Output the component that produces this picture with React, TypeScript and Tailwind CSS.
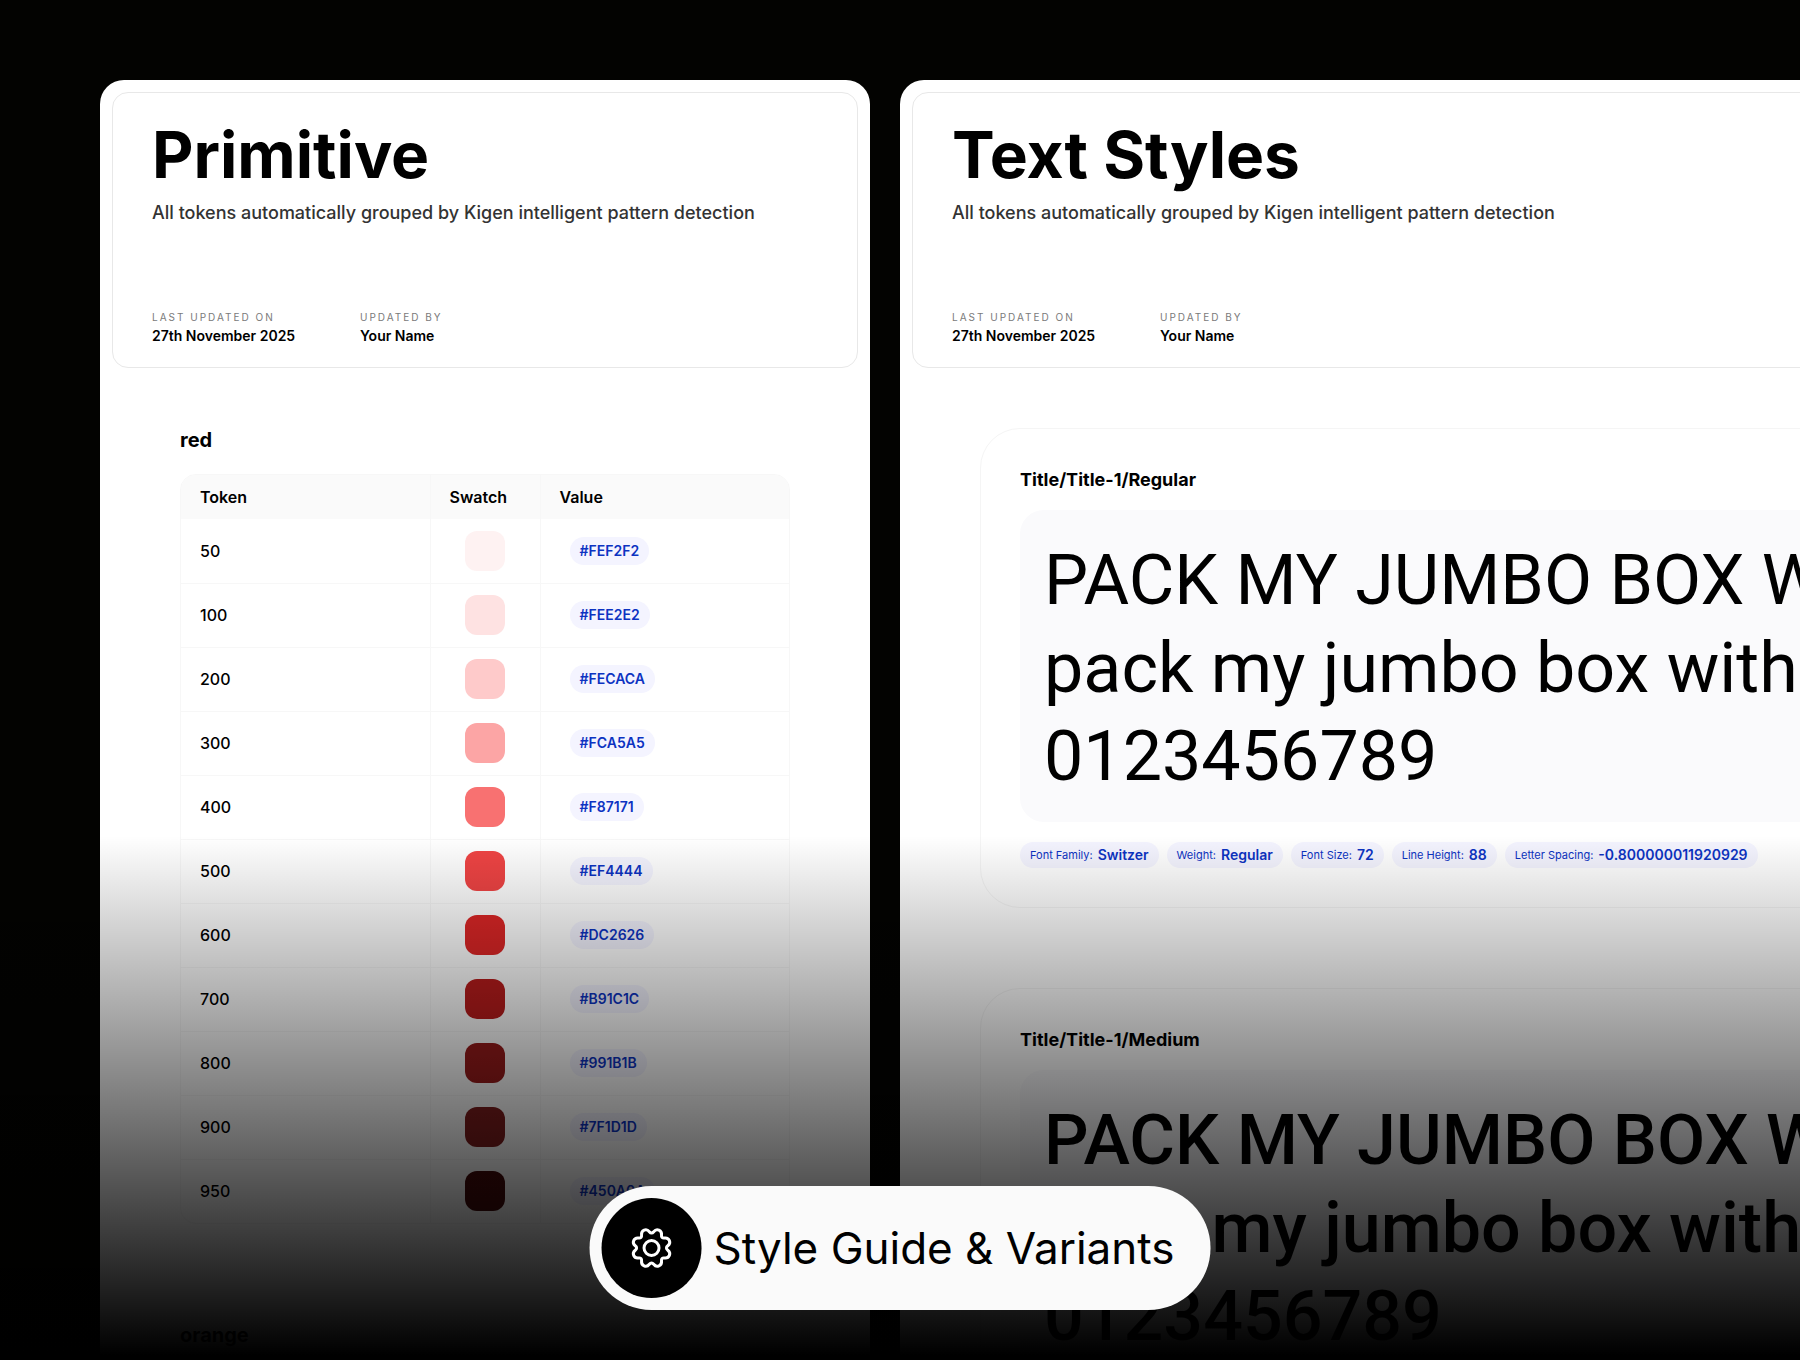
import type { ReactNode } from "react";
import clsx from "clsx";

const reds = [
  { token: "50", value: "#FEF2F2" },
  { token: "100", value: "#FEE2E2" },
  { token: "200", value: "#FECACA" },
  { token: "300", value: "#FCA5A5" },
  { token: "400", value: "#F87171" },
  { token: "500", value: "#EF4444" },
  { token: "600", value: "#DC2626" },
  { token: "700", value: "#B91C1C" },
  { token: "800", value: "#991B1B" },
  { token: "900", value: "#7F1D1D" },
  { token: "950", value: "#450A0A" },
];

const textStyles = [
  { name: "Title/Title-1/Regular", weight: "Regular", sample: "font-normal" },
  { name: "Title/Title-1/Medium", weight: "Medium", sample: "font-medium" },
];

// Eight flat teeth, drawn as quadratic curves through the midpoints of a polar outline.
function gearPath(cx: number, cy: number) {
  const points: [number, number][] = [];
  for (let i = 0; i < 8; i++) {
    const tooth: [number, number][] = [
      [0, 13.5],
      [13, 19.6],
      [32, 19.6],
    ];
    for (const [offset, r] of tooth) {
      const angle = ((i * 45 + offset - 90) * Math.PI) / 180;
      points.push([cx + r * Math.cos(angle), cy + r * Math.sin(angle)]);
    }
  }
  const mid = (a: [number, number], b: [number, number]) =>
    `${((a[0] + b[0]) / 2).toFixed(2)} ${((a[1] + b[1]) / 2).toFixed(2)}`;
  let d = `M${mid(points[points.length - 1], points[0])}`;
  points.forEach((p, i) => {
    const next = points[(i + 1) % points.length];
    d += `Q${p[0].toFixed(2)} ${p[1].toFixed(2)} ${mid(p, next)}`;
  });
  return d + "Z";
}

function GearIcon() {
  return (
    <svg
      viewBox="0 0 44 44"
      className="size-11"
      fill="none"
      stroke="currentColor"
      strokeWidth={3}
      strokeLinejoin="round"
      aria-hidden="true"
    >
      <path d={gearPath(22, 22)} />
      <circle cx="22" cy="22" r="7.5" />
    </svg>
  );
}

function Meta({ label, value }: { label: string; value: string }) {
  return (
    <div>
      <dt className="text-[10px] leading-4 tracking-[2px] text-[#7a7a7a] uppercase">
        {label}
      </dt>
      <dd className="mt-[3px] text-sm leading-4 font-semibold">{value}</dd>
    </div>
  );
}

function Board({
  title,
  className,
  children,
}: {
  title: string;
  className: string;
  children: ReactNode;
}) {
  return (
    <section
      className={clsx("shrink-0 rounded-t-3xl bg-white p-3 text-black", className)}
    >
      <header className="rounded-2xl border border-[#e8e8e8] px-[39px] pt-6 pb-[23px]">
        <h1 className="text-[64px] leading-[76px] font-bold">{title}</h1>
        <p className="mt-1.5 text-lg leading-7 font-medium text-[#333333]">
          All tokens automatically grouped by Kigen intelligent pattern detection
        </p>
        <dl className="mt-[82px] grid grid-cols-[208px_1fr]">
          <Meta label="Last updated on" value="27th November 2025" />
          <Meta label="Updated by" value="Your Name" />
        </dl>
      </header>
      <div className="px-[68px] pt-[60px]">{children}</div>
    </section>
  );
}

function ColorTable() {
  return (
    <div className="mt-[22px] overflow-hidden rounded-2xl border border-[#f7f7f7]">
      <table className="w-full table-fixed border-collapse text-left text-base">
        <thead className="bg-[#fafafa]">
          <tr className="h-11">
            <th className="w-[249px] border-r border-[#f7f7f7] px-[19px] font-semibold">
              Token
            </th>
            <th className="w-[110px] border-r border-[#f7f7f7] px-[19px] font-semibold">
              Swatch
            </th>
            <th className="px-[19px] font-semibold">Value</th>
          </tr>
        </thead>
        <tbody>
          {reds.map((color) => (
            <tr
              key={color.token}
              className="h-16 border-b border-[#f7f7f7] last:border-b-0"
            >
              <td className="border-r border-[#f7f7f7] px-[19px] font-medium">
                {color.token}
              </td>
              <td className="border-r border-[#f7f7f7]">
                <div
                  className="mx-auto size-10 rounded-xl"
                  style={{ backgroundColor: color.value }}
                />
              </td>
              <td className="px-[29px]">
                <span className="inline-block rounded-full bg-[#f4f4ff] px-2.5 py-1 text-sm font-semibold text-[#0c33c2]">
                  {color.value}
                </span>
              </td>
            </tr>
          ))}
        </tbody>
      </table>
    </div>
  );
}

function Chip({ label, value }: { label: string; value: string }) {
  return (
    <li className="flex h-[26px] items-center gap-[5px] rounded-full bg-[#f4f4ff] px-2.5 text-[#0c33c2]">
      <span className="text-[11px]">{label}:</span>
      <span className="text-sm font-semibold">{value}</span>
    </li>
  );
}

function StyleCard({ style }: { style: (typeof textStyles)[number] }) {
  return (
    <article className="rounded-[40px] border border-[#f5f5f5] px-[39px] py-[39px]">
      <h2 className="text-lg leading-6 font-bold">{style.name}</h2>
      <div
        className={clsx(
          "mt-[18px] rounded-3xl bg-[#fafafc] px-6 pt-[26px] pb-[22px] font-[Roboto,sans-serif] text-[70px] leading-[88px] whitespace-nowrap",
          style.sample,
        )}
      >
        <p>PACK MY JUMBO BOX WITH</p>
        <p>pack my jumbo box with</p>
        <p>0123456789</p>
      </div>
      <ul className="mt-5 flex gap-2">
        <Chip label="Font Family" value="Switzer" />
        <Chip label="Weight" value={style.weight} />
        <Chip label="Font Size" value="72" />
        <Chip label="Line Height" value="88" />
        <Chip label="Letter Spacing" value="-0.800000011920929" />
      </ul>
    </article>
  );
}

export default function App() {
  return (
    <main className="relative h-screen overflow-hidden bg-[#030301] font-[Inter,sans-serif]">
      <div className="flex gap-[30px] pt-20 pl-[100px]">
        <Board title="Primitive" className="w-[770px]">
          <h2 className="text-xl leading-6 font-bold">red</h2>
          <ColorTable />
          <h2 className="mt-[97px] pb-20 text-xl leading-7 font-bold">
            orange
          </h2>
        </Board>
        <Board title="Text Styles" className="min-w-[1100px] grow">
          <div className="flex flex-col gap-20">
            {textStyles.map((style) => (
              <StyleCard key={style.name} style={style} />
            ))}
          </div>
        </Board>
      </div>

      <div className="absolute inset-x-0 bottom-0 h-[524px] bg-linear-to-b from-transparent to-black to-99%" />

      <div className="absolute bottom-[50px] left-1/2 flex -translate-x-1/2 items-center gap-3 rounded-full bg-[#fafafa] py-3 pr-9 pl-3 whitespace-nowrap text-black">
        <span className="flex size-[100px] items-center justify-center rounded-full bg-black text-white">
          <GearIcon />
        </span>
        <span className="text-[44px] leading-[56px]">Style Guide &amp; Variants</span>
      </div>
    </main>
  );
}
